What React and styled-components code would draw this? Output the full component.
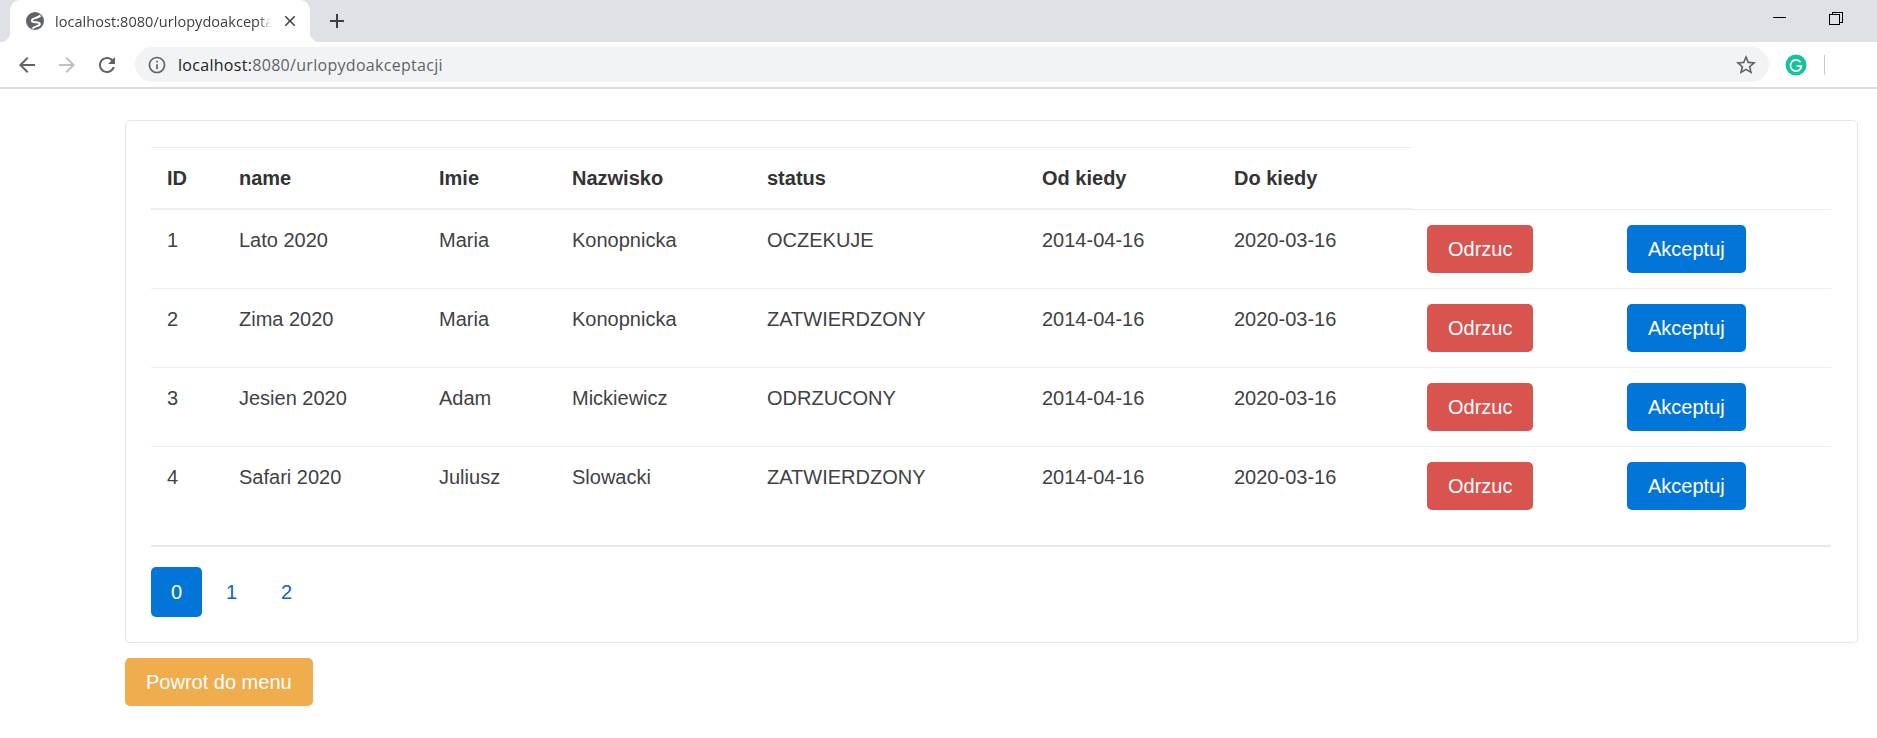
import React from "react";
import styled, { createGlobalStyle } from "styled-components";

const rows = [
  { id: 1, name: "Lato 2020", first: "Maria", last: "Konopnicka", status: "OCZEKUJE" },
  { id: 2, name: "Zima 2020", first: "Maria", last: "Konopnicka", status: "ZATWIERDZONY" },
  { id: 3, name: "Jesien 2020", first: "Adam", last: "Mickiewicz", status: "ODRZUCONY" },
  { id: 4, name: "Safari 2020", first: "Juliusz", last: "Slowacki", status: "ZATWIERDZONY" },
];
const headers = ["ID", "name", "Imie", "Nazwisko", "status", "Od kiedy", "Do kiedy"];
const columns = [72, 200, 133, 195, 275, 192, 194, 199, 220];

const Icon = ({ d, size = 24, color = "#5f6368" }) => (
  <svg width={size} height={size} viewBox="0 0 24 24" fill={color}>
    <path d={d} />
  </svg>
);

const App = () => {
  return (
    <>
      <GlobalStyle />
      <TabStrip>
        <Tab>
          <svg width="20" height="20" viewBox="0 0 20 20">
            <circle cx="10" cy="10" r="9" fill="#5f6368" />
            <path
              d="M15.5 4.5C13 7.5 7 6.5 6.8 9.5C6.7 12.5 14.5 10 14.8 13C15 15.5 10 14.5 7.5 17.5"
              fill="none"
              stroke="#fff"
              strokeWidth="2"
            />
          </svg>
          <TabTitle>localhost:8080/urlopydoakceptacji</TabTitle>
          <Icon
            size={18}
            color="#3c4043"
            d="M19 6.41L17.59 5 12 10.59 6.41 5 5 6.41 10.59 12 5 17.59 6.41 19 12 13.41 17.59 19 19 17.59 13.41 12z"
          />
        </Tab>
        <NewTab>
          <Icon color="#3c4043" d="M19 13h-6v6h-2v-6H5v-2h6V5h2v6h6v2z" />
        </NewTab>
        <WindowControls>
          <Minimize />
          <Restore />
        </WindowControls>
      </TabStrip>

      <Toolbar>
        <NavIcons>
          <Icon d="M20 11H7.83l5.59-5.59L12 4l-8 8 8 8 1.41-1.41L7.83 13H20v-2z" />
          <Icon color="#bdc1c6" d="M12 4l-1.41 1.41L16.17 11H4v2h12.17l-5.58 5.59L12 20l8-8z" />
          <Icon d="M17.65 6.35C16.2 4.9 14.21 4 12 4c-4.42 0-7.99 3.58-7.99 8s3.57 8 7.99 8c3.73 0 6.84-2.55 7.73-6h-2.08c-.82 2.33-3.04 4-5.65 4-3.31 0-6-2.69-6-6s2.69-6 6-6c1.66 0 3.14.69 4.22 1.78L13 11h7V4l-2.35 2.35z" />
        </NavIcons>
        <Omnibox>
          <Icon
            size={20}
            d="M11 7h2v2h-2zm0 4h2v6h-2zm1-9C6.48 2 2 6.48 2 12s4.48 10 10 10 10-4.48 10-10S17.52 2 12 2zm0 18c-4.41 0-8-3.59-8-8s3.59-8 8-8 8 3.59 8 8-3.59 8-8 8z"
          />
          <Url>
            <b>localhost:</b>8080/urlopydoakceptacji
          </Url>
          <Icon d="M22 9.24l-7.19-.62L12 2 9.19 8.63 2 9.24l5.46 4.73L5.82 21 12 17.27 18.18 21l-1.63-7.03L22 9.24zM12 15.4l-3.76 2.27 1-4.28-3.32-2.88 4.38-.38L12 6.1l1.71 4.04 4.38.38-3.32 2.88 1 4.28L12 15.4z" />
        </Omnibox>
        <svg width="22" height="22" viewBox="0 0 22 22">
          <circle cx="11" cy="11" r="10.5" fill="#15c39a" />
          <path
            d="M15.6 8.2A5.6 5.6 0 1 0 16.6 12H11.6"
            fill="none"
            stroke="#fff"
            strokeWidth="1.7"
          />
          <path d="M13.4 12.2l2.8 2.6v-2.6z" fill="#fff" />
        </svg>
        <ToolbarDivider />
      </Toolbar>

      <Main>
        <Card>
          <Table>
            <colgroup>
              {columns.map((w, i) => (
                <col key={i} style={{ width: w }} />
              ))}
            </colgroup>
            <thead>
              <tr>
                {headers.map((h) => (
                  <Th key={h}>{h}</Th>
                ))}
              </tr>
            </thead>
            <tbody>
              {rows.map((r) => (
                <tr key={r.id}>
                  <Td>{r.id}</Td>
                  <Td>{r.name}</Td>
                  <Td>{r.first}</Td>
                  <Td>{r.last}</Td>
                  <Td>{r.status}</Td>
                  <Td>2014-04-16</Td>
                  <Td>2020-03-16</Td>
                  <ActionTd>
                    <Button $bg="#d9534f">Odrzuc</Button>
                  </ActionTd>
                  <Td>
                    <Button $bg="#0275d8">Akceptuj</Button>
                  </Td>
                </tr>
              ))}
            </tbody>
          </Table>
          <Rule />
          <Pagination>
            {[0, 1, 2].map((p) => (
              <PageLink key={p} $active={p === 0}>
                {p}
              </PageLink>
            ))}
          </Pagination>
        </Card>
        <BackRow>
          <Button $bg="#f0ad4e">Powrot do menu</Button>
        </BackRow>
      </Main>
    </>
  );
};

export default App;

const GlobalStyle = createGlobalStyle`
  body {
    margin: 0;
    background: #fff;
    font-family: "Liberation Sans", Arial, sans-serif;
    color: #3f4244;
  }
`;

const TabStrip = styled.div`
  display: flex;
  align-items: flex-end;
  height: 42px;
  background: #dee1e6;
`;

const Tab = styled.div`
  position: relative;
  display: flex;
  align-items: center;
  width: 300px;
  height: 42px;
  margin-left: 10px;
  padding: 0 11px 0 15px;
  box-sizing: border-box;
  background: #fff;
  border-radius: 10px 10px 0 0;

  &::before,
  &::after {
    content: "";
    position: absolute;
    bottom: 0;
    width: 10px;
    height: 10px;
  }
  &::before {
    left: -10px;
    background: radial-gradient(circle at 0 0, transparent 10px, #fff 10.5px);
  }
  &::after {
    right: -10px;
    background: radial-gradient(circle at 100% 0, transparent 10px, #fff 10.5px);
  }
`;

const TabTitle = styled.span`
  flex: 1;
  margin: 0 9px 0 10px;
  overflow: hidden;
  white-space: nowrap;
  font-family: "Open Sans", sans-serif;
  font-size: 14.5px;
  letter-spacing: 0.05px;
  color: #3c4043;
  -webkit-mask-image: linear-gradient(to left, transparent 0, #000 14px);
  mask-image: linear-gradient(to left, transparent 0, #000 14px);
`;

const NewTab = styled.div`
  display: flex;
  align-items: center;
  height: 42px;
  margin-left: 15px;
`;

const WindowControls = styled.div`
  display: flex;
  align-items: flex-start;
  gap: 43px;
  margin-left: auto;
  margin-right: 37px;
  height: 42px;
  isolation: isolate;
`;

const Minimize = styled.div`
  width: 13px;
  height: 1px;
  margin-top: 17px;
  background: #000;
`;

const Restore = styled.div`
  position: relative;
  width: 9px;
  height: 9px;
  margin-top: 14px;
  border: 1px solid #000;
  background: #dee1e6;

  &::before {
    content: "";
    position: absolute;
    top: -3px;
    right: -4px;
    width: 9px;
    height: 9px;
    border: 1px solid #000;
    z-index: -1;
  }
`;

const Toolbar = styled.div`
  display: flex;
  align-items: center;
  height: 45px;
  padding: 0 52px 0 0;
  background: #fff;
  border-bottom: 2px solid #dadce0;

  > svg {
    margin-left: 16px;
  }
`;

const NavIcons = styled.div`
  display: flex;
  align-items: center;
  gap: 16px;
  padding-left: 15px;
  width: 135px;
  box-sizing: border-box;
`;

const Omnibox = styled.div`
  display: flex;
  align-items: center;
  flex: 1;
  height: 35px;
  padding: 0 11px 0 12px;
  border-radius: 18px;
  background: #f1f3f4;
`;

const Url = styled.div`
  flex: 1;
  margin-left: 11px;
  font-family: "Open Sans", sans-serif;
  font-size: 16px;
  letter-spacing: 0.3px;
  color: #5f6368;

  b {
    font-weight: 400;
    color: #202124;
  }
`;

const ToolbarDivider = styled.div`
  width: 1px;
  height: 20px;
  margin-left: 17px;
  background: #c8cacd;
`;

const Main = styled.main`
  padding: 31px 19px 0 125px;
`;

const Card = styled.section`
  padding: 26px 26px 25px 25px;
  border: 1px solid #e5e5e5;
  border-radius: 5px;
`;

const Table = styled.table`
  width: 1680px;
  table-layout: fixed;
  border-collapse: collapse;
  font-size: 20px;
  line-height: 30px;
`;

const Th = styled.th`
  padding: 15px 16px;
  text-align: left;
  font-weight: 700;
  color: #333;
  border-top: 1px solid #eceeef;
  border-bottom: 2px solid #eceeef;
`;

const Td = styled.td`
  padding: 15px 16px;
  vertical-align: top;
  border-top: 1px solid #eceeef;
`;

const ActionTd = styled(Td)`
  padding-left: 15px;
`;

const Button = styled.button`
  height: 48px;
  padding: 0 20px;
  border: 1px solid transparent;
  border-radius: 5px;
  background: ${({ $bg }) => $bg};
  color: #fff;
  font: 20px/30px "Liberation Sans", Arial, sans-serif;
`;

const Rule = styled.hr`
  margin: 20px 0;
  border: 0;
  border-top: 2px solid #e9e9e9;
`;

const Pagination = styled.nav`
  display: flex;
  gap: 4px;
`;

const PageLink = styled.a`
  width: 51px;
  height: 50px;
  border-radius: 5px;
  font-size: 20px;
  line-height: 50px;
  text-align: center;
  background: ${({ $active }) => ($active ? "#0275d8" : "transparent")};
  color: ${({ $active }) => ($active ? "#fff" : "#0b62d6")};
`;

const BackRow = styled.div`
  margin-top: 15px;
`;
